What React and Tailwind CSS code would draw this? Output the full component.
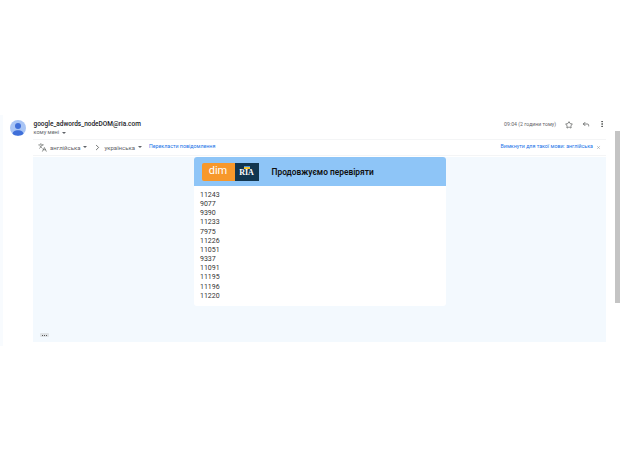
import React from "react";
import { Star, Reply, EllipsisVertical, ChevronRight, Languages, X } from "lucide-react";

const numbers = ["11243","9077","9390","11233","7975","11226","11051","9337","11091","11195","11196","11220"];

function Caret() {
  return <span className="inline-block w-0 h-0 border-l-[2px] border-r-[2px] border-t-[2.5px] border-l-transparent border-r-transparent border-t-[#5f6368]" />;
}

export default function App() {
  return (
    <div className="w-[620px] h-[460px] bg-white overflow-hidden flex font-['Roboto',sans-serif] relative">
      <div className="pt-[115px] pl-0 flex w-[615px] h-[346px] items-start">
        <div className="w-[3px] h-[231px] bg-[#f8fbfe] shrink-0" />
        <div className="w-[7px] shrink-0" />
        <div className="w-[16px] h-[16px] mt-[5px] rounded-full bg-[#a9c5f5] shrink-0 overflow-hidden flex items-center justify-center relative">
          <svg width="16" height="16" viewBox="0 0 16 16"><circle cx="8" cy="6" r="3" fill="#3f6fd9" /><path d="M2.500 14.500c0-3 2.500-4.300 5.500-4.300s5.500 1.300 5.500 4.300c0 1.500-11 1.500-11 0z" fill="#3f6fd9" /></svg>
        </div>
        <div className="w-[7px] shrink-0" />
        <div className="flex flex-col w-[573px] shrink-0">
          <div className="flex justify-between h-[24px]">
            <div className="flex flex-col pt-[4px] pl-[0.5px]">
              <div className="text-[6.500px] leading-[10px] font-medium text-[#202124]">google_adwords_nodeDOM@ria.com</div>
              <div className="flex items-center gap-[3px] text-[5.500px] leading-[7px] text-[#5f6368]">кому мені <Caret /></div>
            </div>
            <div className="flex items-start pt-[4px]">
              <span className="text-[5.200px] leading-[10px] text-[#5f6368]">09:04 (2 години тому)</span>
              <Star size={8} strokeWidth={2} className="ml-[9px] mt-[2px] text-[#444746]" />
              <Reply size={8} strokeWidth={2} className="ml-[9px] mt-[1px] text-[#444746]" />
              <EllipsisVertical size={8} strokeWidth={2.500} className="ml-[8px] mt-[1px] text-[#444746]" />
            </div>
          </div>
          <div className="h-[17px] pb-[1px] flex items-center justify-between text-[6px] border-y border-[#f4f5f6]">
            <div className="flex items-center pl-[5px]">
              <Languages size={9} strokeWidth={1.500} className="text-[#444746]" />
              <span className="ml-[3px] text-[#5f6368]">англійська</span>
              <span className="ml-[3px] flex"><Caret /></span>
              <ChevronRight size={9} strokeWidth={2} className="ml-[6px] text-[#444746]" />
              <span className="ml-[2px] text-[#5f6368]">українська</span>
              <span className="ml-[3px] flex"><Caret /></span>
              <span className="ml-[7px] text-[#1a73e8] text-[5.300px]">Перекласти повідомлення</span>
            </div>
            <div className="flex items-center pr-[5px]">
              <span className="text-[#1a73e8] text-[5.300px]">Вимкнути для такої мови: англійська</span>
              <X size={5} strokeWidth={1.500} className="ml-[3px] text-[#5f6368]" />
            </div>
          </div>
          <div className="h-[185px] mt-[1px] bg-[#f3f9fe] flex flex-col items-center relative">
            <div className="w-[252px] bg-white rounded-[3px] overflow-hidden">
              <div className="h-[29px] bg-[#8ec5f7] flex items-center pl-[8px]">
                <div className="h-[18px] w-[33px] bg-[#f7982b] rounded-l-[2px] flex items-center justify-center text-white text-[11px]">dim</div>
                <div className="h-[18px] w-[24px] bg-[#12364f] flex flex-col items-center justify-center">
                  <div className="w-[6px] h-[3px] bg-[#f4c430] border-t border-[#4a90d9] -mb-[1px]" />
                  <span className="font-['Liberation_Serif',serif] font-bold text-[8px] leading-[9px] text-white">RIA</span>
                </div>
                <span className="ml-[13px] mt-[1px] text-[8.400px] font-semibold text-[#111]">Продовжуємо перевіряти</span>
              </div>
              <div className="pt-[5px] pb-[5px] pl-[6.500px] text-[7px] leading-[9.150px] text-[#333]">
                {numbers.map((n) => <div key={n}>{n}</div>)}
              </div>
            </div>
            <div className="absolute left-[7px] bottom-[5px] w-[9px] h-[4px] rounded-[1px] bg-[#dfe3e6] flex items-center justify-center gap-[1px]">
              <span className="w-[1px] h-[1px] bg-[#555]" />
              <span className="w-[1px] h-[1px] bg-[#555]" />
              <span className="w-[1px] h-[1px] bg-[#555]" />
            </div>
          </div>
        </div>
      </div>
      <div className="absolute left-[615px] top-[131px] w-[5px] h-[172px] bg-[#c4c4c4]" />
    </div>
  );
}
